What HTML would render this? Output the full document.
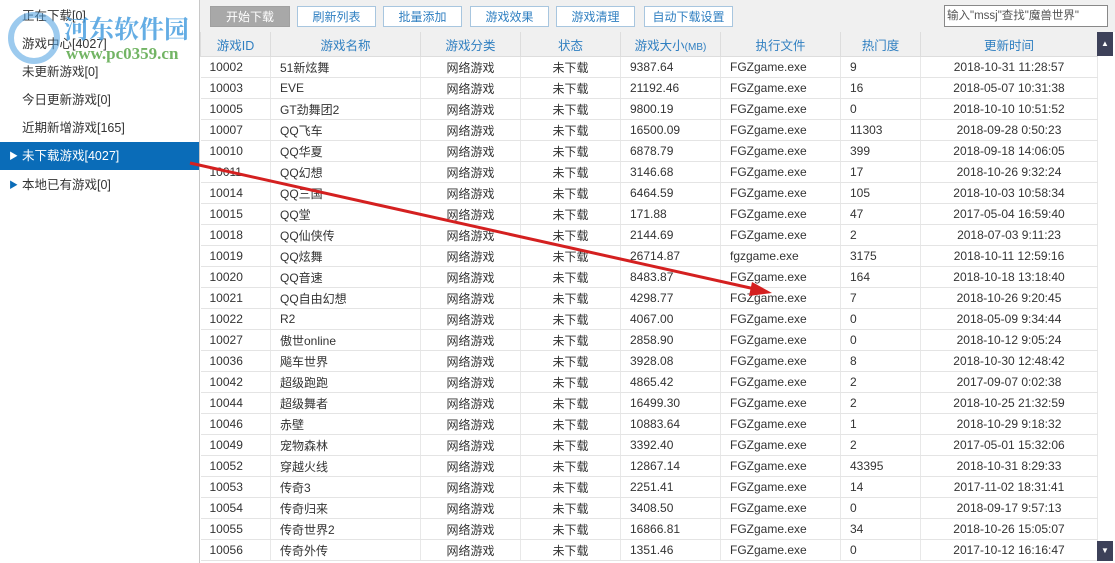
<!DOCTYPE html><html><head><meta charset="utf-8"><style>
body{margin:0;width:1115px;height:563px;overflow:hidden;background:#fff;font-family:"Liberation Sans","Noto Sans CJK SC",sans-serif;font-size:12px;color:#333;position:relative}
#left{position:absolute;left:0;top:0;width:199px;height:563px;border-right:1px solid #c8c8c8;background:#fff}
.it{position:absolute;left:0;width:199px;height:28px;line-height:28px;padding-left:22px;box-sizing:border-box;font-size:12.5px;color:#333}
.sel{background:#0a6cb8;color:#fff}
.tri{position:absolute;left:9px;font-size:9px}
#tb{position:absolute;left:200px;top:0;width:915px;height:32px;background:#f0f0f0}
.b{position:absolute;top:6px;height:21px;line-height:20px;border:1px solid #a8c6df;background:#fff;color:#2f7fc1;text-align:center;box-sizing:border-box;font-size:12px}
#srch{position:absolute;left:944px;top:5px;width:164px;height:22px;border:1px solid #888;background:#fff;box-sizing:border-box;line-height:20px;padding-left:2px;font-size:11.5px;color:#555}
table{position:absolute;left:200px;top:32px;border-collapse:collapse;width:897px;table-layout:fixed}
th{height:24px;background:#f0f0f0;color:#2f7fc1;font-weight:normal;border:1px solid #ddd;border-top:0;font-size:12.5px;padding:0}
td{height:20px;border-bottom:1px solid #e4e4e4;border-right:1px solid #e8e8e8;padding:0 0 0 9px;white-space:nowrap;font-size:12px}
td.c{text-align:center;padding:0}
.sb{position:absolute;left:1097px;width:16px;height:24px;background:#3d4159;color:#fff;font-size:8px;text-align:center;line-height:24px}
</style></head><body>
<div id="left">
<div class="it" style="top:2px">正在下载[0]</div>
<div class="it" style="top:30px">游戏中心[4027]</div>
<div class="it" style="top:58px">未更新游戏[0]</div>
<div class="it" style="top:86px">今日更新游戏[0]</div>
<div class="it" style="top:114px">近期新增游戏[165]</div>
<div class="it sel" style="top:142px"><span class="tri">▶</span>未下载游戏[4027]</div>
<div class="it" style="top:171px"><span class="tri" style="color:#0a6cb8">▶</span>本地已有游戏[0]</div>
<div style="position:absolute;left:8px;top:12px;width:40px;height:40px;border-radius:50%;border:6px solid #4a9fe0;opacity:.55"></div>
<div style="position:absolute;left:64px;top:10px;font-size:25px;font-weight:bold;color:#4a9fe0;opacity:.85;font-family:'Noto Serif CJK SC',serif">河东软件园</div>
<div style="position:absolute;left:66px;top:44px;font-size:17px;font-weight:bold;color:#5aa84a;opacity:.85;font-family:'Liberation Serif',serif">www.pc0359.cn</div>
</div>
<div id="tb">
<div class="b" style="left:10px;width:80px;background:#a8a8a8;border-color:#a0a0a0;color:#fff">开始下载</div>
<div class="b" style="left:97px;width:79px">刷新列表</div>
<div class="b" style="left:183px;width:79px">批量添加</div>
<div class="b" style="left:270px;width:79px">游戏效果</div>
<div class="b" style="left:356px;width:79px">游戏清理</div>
<div class="b" style="left:444px;width:89px">自动下载设置</div>
</div>
<div id="srch">输入"mssj"查找"魔兽世界"</div>
<table>
<colgroup><col style="width:70px"><col style="width:150px"><col style="width:100px"><col style="width:100px"><col style="width:100px"><col style="width:120px"><col style="width:80px"><col style="width:177px"></colgroup>
<tr><th>游戏ID</th><th>游戏名称</th><th>游戏分类</th><th>状态</th><th>游戏大小<span style="font-size:10px">(MB)</span></th><th>执行文件</th><th>热门度</th><th>更新时间</th></tr>
<tr><td>10002</td><td>51新炫舞</td><td class="c">网络游戏</td><td class="c">未下载</td><td>9387.64</td><td>FGZgame.exe</td><td>9</td><td class="c">2018-10-31 11:28:57</td></tr>
<tr><td>10003</td><td>EVE</td><td class="c">网络游戏</td><td class="c">未下载</td><td>21192.46</td><td>FGZgame.exe</td><td>16</td><td class="c">2018-05-07 10:31:38</td></tr>
<tr><td>10005</td><td>GT劲舞团2</td><td class="c">网络游戏</td><td class="c">未下载</td><td>9800.19</td><td>FGZgame.exe</td><td>0</td><td class="c">2018-10-10 10:51:52</td></tr>
<tr><td>10007</td><td>QQ飞车</td><td class="c">网络游戏</td><td class="c">未下载</td><td>16500.09</td><td>FGZgame.exe</td><td>11303</td><td class="c">2018-09-28 0:50:23</td></tr>
<tr><td>10010</td><td>QQ华夏</td><td class="c">网络游戏</td><td class="c">未下载</td><td>6878.79</td><td>FGZgame.exe</td><td>399</td><td class="c">2018-09-18 14:06:05</td></tr>
<tr><td>10011</td><td>QQ幻想</td><td class="c">网络游戏</td><td class="c">未下载</td><td>3146.68</td><td>FGZgame.exe</td><td>17</td><td class="c">2018-10-26 9:32:24</td></tr>
<tr><td>10014</td><td>QQ三国</td><td class="c">网络游戏</td><td class="c">未下载</td><td>6464.59</td><td>FGZgame.exe</td><td>105</td><td class="c">2018-10-03 10:58:34</td></tr>
<tr><td>10015</td><td>QQ堂</td><td class="c">网络游戏</td><td class="c">未下载</td><td>171.88</td><td>FGZgame.exe</td><td>47</td><td class="c">2017-05-04 16:59:40</td></tr>
<tr><td>10018</td><td>QQ仙侠传</td><td class="c">网络游戏</td><td class="c">未下载</td><td>2144.69</td><td>FGZgame.exe</td><td>2</td><td class="c">2018-07-03 9:11:23</td></tr>
<tr><td>10019</td><td>QQ炫舞</td><td class="c">网络游戏</td><td class="c">未下载</td><td>26714.87</td><td>fgzgame.exe</td><td>3175</td><td class="c">2018-10-11 12:59:16</td></tr>
<tr><td>10020</td><td>QQ音速</td><td class="c">网络游戏</td><td class="c">未下载</td><td>8483.87</td><td>FGZgame.exe</td><td>164</td><td class="c">2018-10-18 13:18:40</td></tr>
<tr><td>10021</td><td>QQ自由幻想</td><td class="c">网络游戏</td><td class="c">未下载</td><td>4298.77</td><td>FGZgame.exe</td><td>7</td><td class="c">2018-10-26 9:20:45</td></tr>
<tr><td>10022</td><td>R2</td><td class="c">网络游戏</td><td class="c">未下载</td><td>4067.00</td><td>FGZgame.exe</td><td>0</td><td class="c">2018-05-09 9:34:44</td></tr>
<tr><td>10027</td><td>傲世online</td><td class="c">网络游戏</td><td class="c">未下载</td><td>2858.90</td><td>FGZgame.exe</td><td>0</td><td class="c">2018-10-12 9:05:24</td></tr>
<tr><td>10036</td><td>飚车世界</td><td class="c">网络游戏</td><td class="c">未下载</td><td>3928.08</td><td>FGZgame.exe</td><td>8</td><td class="c">2018-10-30 12:48:42</td></tr>
<tr><td>10042</td><td>超级跑跑</td><td class="c">网络游戏</td><td class="c">未下载</td><td>4865.42</td><td>FGZgame.exe</td><td>2</td><td class="c">2017-09-07 0:02:38</td></tr>
<tr><td>10044</td><td>超级舞者</td><td class="c">网络游戏</td><td class="c">未下载</td><td>16499.30</td><td>FGZgame.exe</td><td>2</td><td class="c">2018-10-25 21:32:59</td></tr>
<tr><td>10046</td><td>赤壁</td><td class="c">网络游戏</td><td class="c">未下载</td><td>10883.64</td><td>FGZgame.exe</td><td>1</td><td class="c">2018-10-29 9:18:32</td></tr>
<tr><td>10049</td><td>宠物森林</td><td class="c">网络游戏</td><td class="c">未下载</td><td>3392.40</td><td>FGZgame.exe</td><td>2</td><td class="c">2017-05-01 15:32:06</td></tr>
<tr><td>10052</td><td>穿越火线</td><td class="c">网络游戏</td><td class="c">未下载</td><td>12867.14</td><td>FGZgame.exe</td><td>43395</td><td class="c">2018-10-31 8:29:33</td></tr>
<tr><td>10053</td><td>传奇3</td><td class="c">网络游戏</td><td class="c">未下载</td><td>2251.41</td><td>FGZgame.exe</td><td>14</td><td class="c">2017-11-02 18:31:41</td></tr>
<tr><td>10054</td><td>传奇归来</td><td class="c">网络游戏</td><td class="c">未下载</td><td>3408.50</td><td>FGZgame.exe</td><td>0</td><td class="c">2018-09-17 9:57:13</td></tr>
<tr><td>10055</td><td>传奇世界2</td><td class="c">网络游戏</td><td class="c">未下载</td><td>16866.81</td><td>FGZgame.exe</td><td>34</td><td class="c">2018-10-26 15:05:07</td></tr>
<tr><td>10056</td><td>传奇外传</td><td class="c">网络游戏</td><td class="c">未下载</td><td>1351.46</td><td>FGZgame.exe</td><td>0</td><td class="c">2017-10-12 16:16:47</td></tr>
</table>
<div class="sb" style="top:32px">▲</div>
<div class="sb" style="top:541px;height:20px;line-height:20px">▼</div>
<svg style="position:absolute;left:0;top:0" width="1115" height="563"><line x1="190" y1="163" x2="755" y2="289" stroke="#d42020" stroke-width="3"/><polygon points="772,293 752,282 749,296" fill="#d42020"/></svg>
</body></html>
